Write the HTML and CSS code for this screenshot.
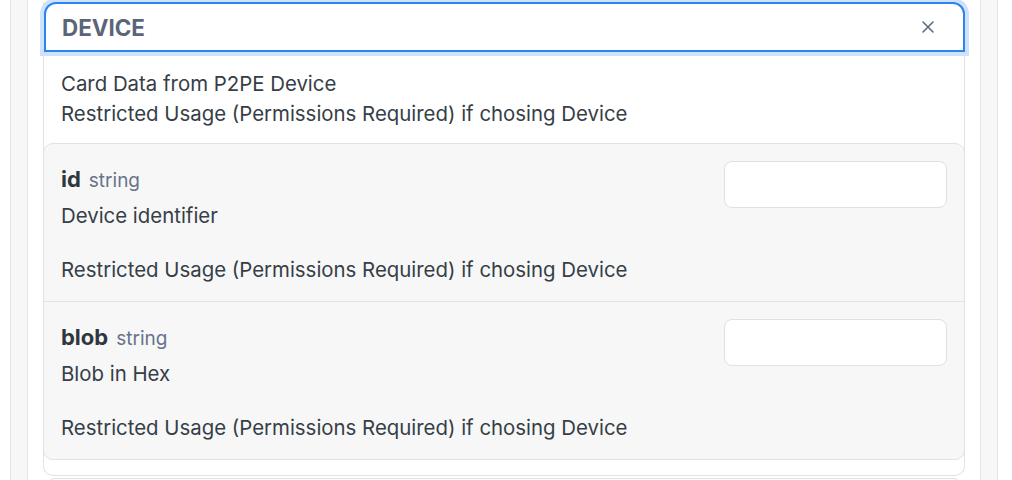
FILE: index.html
```html
<!DOCTYPE html>
<html>
<head>
<meta charset="utf-8">
<link rel="stylesheet" href="styles.css">
</head>
<body>
<div class="outer">
  <div class="panel">
    <div class="card">
      <div class="card-head">
        <span class="card-title">DEVICE</span>
        <svg class="close" width="14" height="14" viewBox="0 0 14 14"><path d="M2 2 L12 12 M12 2 L2 12" stroke="#5f6a7d" stroke-width="1.6" stroke-linecap="round"/></svg>
      </div>
      <div class="card-desc">
        <div>Card Data from P2PE Device</div>
        <div>Restricted Usage (Permissions Required) if chosing Device</div>
      </div>
      <div class="fields">
        <div class="field">
          <div class="field-info">
            <div class="field-name"><b>id</b><span class="type">string</span></div>
            <div class="field-desc">Device identifier</div>
            <div class="field-note">Restricted Usage (Permissions Required) if chosing Device</div>
          </div>
          <div class="field-input"></div>
        </div>
        <div class="field">
          <div class="field-info">
            <div class="field-name"><b>blob</b><span class="type">string</span></div>
            <div class="field-desc">Blob in Hex</div>
            <div class="field-note">Restricted Usage (Permissions Required) if chosing Device</div>
          </div>
          <div class="field-input"></div>
        </div>
      </div>
    </div>
    <div class="card next"></div>
  </div>
</div>
</body>
</html>
```
FILE: styles.css
```css
html, body {
  margin: 0;
  padding: 0;
  background: #ffffff;
  font-family: Inter, "Liberation Sans", sans-serif;
  color: #363e47;
  overflow: hidden;
}
.outer {
  margin-left: 10px;
  width: 988px;
  height: 480px;
  background: #f7f7f7;
  border-left: 1px solid #e4e4e4;
  border-right: 1px solid #e4e4e4;
  padding: 0 16px;
  box-sizing: border-box;
}
.panel {
  background: #ffffff;
  border-left: 1px solid #e4e4e4;
  border-right: 1px solid #e4e4e4;
  height: 480px;
  padding: 2px 15px 0 15px;
  box-sizing: border-box;
}
.card {
  border: 1px solid #e2e2e2;
  border-top: none;
  border-radius: 0 0 10px 10px;
  background: #ffffff;
  padding-bottom: 15px;
}
.card-head {
  margin: 0 -1px 0 0;
  height: 50px;
  box-sizing: border-box;
  border: 2px solid #2b84f0;
  border-radius: 12px 12px 0 0;
  box-shadow: 0 0 0 4px #cfe2fc;
  display: flex;
  align-items: center;
  justify-content: space-between;
  padding: 0 28px 0 16px;
  background: #ffffff;
}
.card-title {
  font-size: 22.4px;
  font-weight: 700;
  color: #5b6579;
}
.card-desc {
  padding: 17px 17px 14px 17px;
  font-size: 20.4px;
  line-height: 30px;
}
.fields {
  margin: 0 -1px;
  background: #f7f7f7;
  border: 1px solid #e2e2e2;
  border-radius: 10px;
}
.field {
  display: flex;
  justify-content: space-between;
  align-items: flex-start;
  padding: 17px 17px 16px 17px;
  border-bottom: 1px solid #e2e2e2;
}
.field:last-child {
  border-bottom: none;
}
.field-name {
  height: 36px;
  line-height: 36px;
  font-size: 22px;
}
.field-name b {
  font-weight: 700;
  color: #2f363e;
}
.type {
  font-size: 19px;
  color: #66748a;
  margin-left: 8px;
}
.field-desc {
  margin-top: 4px;
  font-size: 20.4px;
  line-height: 30px;
}
.field-note {
  margin-top: 24px;
  font-size: 20.4px;
  line-height: 30px;
}
.field-input {
  width: 223px;
  height: 47px;
  box-sizing: border-box;
  background: #ffffff;
  border: 1px solid #e0e0e0;
  border-radius: 8px;
}
.card.next {
  margin: 2px 2px 0 2px;
  height: 20px;
  border-top: 1px solid #e2e2e2;
  border-radius: 10px 10px 0 0;
  padding: 0;
}
```
